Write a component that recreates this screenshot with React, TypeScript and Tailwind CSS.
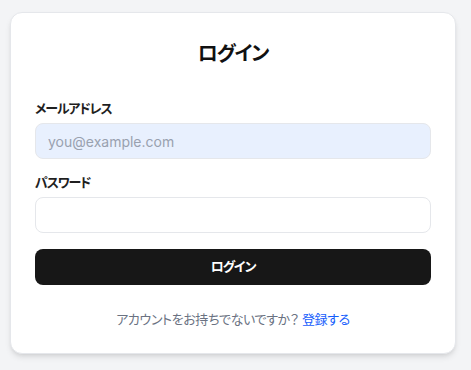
import React, { useState } from 'react'

const font = "font-['Inter','Noto_Sans_CJK_JP',sans-serif] [font-feature-settings:'palt']"

export default function App() {
  const [email, setEmail] = useState('')
  const [password, setPassword] = useState('')

  return (
    <div className={`min-h-[370px] w-[471px] bg-[#f3f4f6] pt-3 pl-2.5 ${font}`}>
      <div className="w-[446px] rounded-xl border border-gray-200 bg-white px-6 pt-[27px] pb-6 shadow-md">
        <h1 className="text-center text-xl font-bold leading-7 tracking-[-0.06em] text-[#111]">ログイン</h1>

        <form className="mt-[30px] flex flex-col" onSubmit={(e) => e.preventDefault()}>
          <label className="mb-[5px] text-[13px] font-bold leading-5 tracking-[-0.09em] text-[#1f1f1f]">
            メールアドレス
          </label>
          <input
            type="email"
            value={email}
            onChange={(e) => setEmail(e.target.value)}
            placeholder="you@example.com"
            className="h-9 rounded-lg border border-gray-200 bg-[#e8f0fe] px-3 text-sm text-gray-900 placeholder-gray-400 outline-none"
          />

          <label className="mt-[13px] mb-[5px] text-[13px] font-bold leading-5 tracking-[-0.09em] text-[#1f1f1f]">
            パスワード
          </label>
          <input
            type="password"
            value={password}
            onChange={(e) => setPassword(e.target.value)}
            className="h-9 rounded-lg border border-gray-200 bg-white px-3 text-sm outline-none"
          />

          <button
            type="submit"
            className="mt-4 h-9 rounded-lg bg-[#171717] text-[13px] font-bold tracking-[-0.09em] text-white"
          >
            ログイン
          </button>
        </form>

        <p className="mt-6 text-center text-[13px] leading-5 tracking-[-0.03em] text-gray-500">
          アカウントをお持ちでないですか？ <a href="#" className="text-blue-600">登録する</a>
        </p>
      </div>
    </div>
  )
}
